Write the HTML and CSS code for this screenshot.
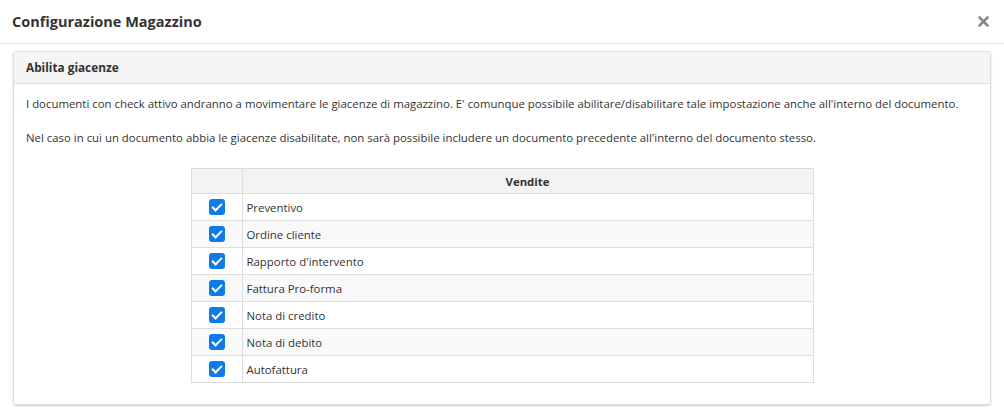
FILE: index.html
```html
<!DOCTYPE html>
<html lang="it">
<head>
    <meta charset="UTF-8">
    <meta name="viewport" content="width=device-width, initial-scale=1.0">
    <title>Configurazione Magazzino</title>
    <link rel="stylesheet" href="styles.css">
</head>
<body>
    <div class="modal">
        <div class="modal-header">
            <h4 class="modal-title">Configurazione Magazzino</h4>
            <button class="close" type="button">
                <svg width="11" height="11" viewBox="0 0 11 11"><path d="M1.5 1.5 L9.5 9.5 M9.5 1.5 L1.5 9.5" stroke="#888" stroke-width="2.6" stroke-linecap="round"/></svg>
            </button>
        </div>
        <div class="modal-body">
            <div class="panel">
                <div class="panel-heading">Abilita giacenze</div>
                <div class="panel-body">
                    <p>I documenti con check attivo andranno a movimentare le giacenze di magazzino. E' comunque possibile abilitare/disabilitare tale impostazione anche all'interno del documento.</p>
                    <p>Nel caso in cui un documento abbia le giacenze disabilitate, non sarà possibile includere un documento precedente all'interno del documento stesso.</p>
                    <table class="doc-table">
                        <thead>
                            <tr><th class="col-check"></th><th>Vendite</th></tr>
                        </thead>
                        <tbody>
                            <tr><td class="col-check"><span class="check"></span></td><td>Preventivo</td></tr>
                            <tr><td class="col-check"><span class="check"></span></td><td>Ordine cliente</td></tr>
                            <tr><td class="col-check"><span class="check"></span></td><td>Rapporto d'intervento</td></tr>
                            <tr><td class="col-check"><span class="check"></span></td><td>Fattura Pro-forma</td></tr>
                            <tr><td class="col-check"><span class="check"></span></td><td>Nota di credito</td></tr>
                            <tr><td class="col-check"><span class="check"></span></td><td>Nota di debito</td></tr>
                            <tr><td class="col-check"><span class="check"></span></td><td>Autofattura</td></tr>
                        </tbody>
                    </table>
                </div>
            </div>
        </div>
    </div>
</body>
</html>
```

FILE: styles.css
```css
body {
    margin: 0;
    font-family: "Open Sans", "Noto Sans", sans-serif;
    font-size: 11.4px;
    color: #333;
    background: #fff;
}
.modal {
    width: 1004px;
}
.modal-header {
    display: flex;
    justify-content: space-between;
    align-items: center;
    height: 44px;
    padding: 0 15px 0 12px;
    box-sizing: border-box;
    border-bottom: 1px solid #e5e5e5;
}
.modal-title {
    margin: 0;
    font-size: 14.5px;
    font-weight: bold;
    color: #333;
}
.close {
    border: none;
    background: none;
    padding: 0;
    cursor: pointer;
    display: flex;
}
.modal-body {
    padding: 7px 13px;
}
.panel {
    border: 1px solid #ddd;
    border-radius: 3px;
    box-shadow: 0 1px 2px rgba(0, 0, 0, 0.2);
}
.panel-heading {
    height: 31px;
    line-height: 31px;
    padding: 0 12px;
    background-color: #f5f5f5;
    border-bottom: 1px solid #ddd;
    font-weight: bold;
    font-size: 11.8px;
}
.panel-body {
    padding: 11px 12px 21px;
}
.panel-body p {
    margin: 0 0 17px;
    line-height: 17px;
}
.doc-table {
    width: 623px;
    margin: 22px auto 0;
    border-collapse: collapse;
}
.doc-table th, .doc-table td {
    border: 1px solid #ddd;
    padding: 0 4px;
    text-align: left;
}
.doc-table th {
    height: 24px;
    background-color: #f3f3f3;
    text-align: center;
    font-weight: bold;
}
.doc-table td {
    height: 26px;
}
.doc-table tbody tr:nth-child(even) td {
    background-color: #f9f9f9;
}
.doc-table .col-check {
    width: 42px;
    text-align: center;
}
.check {
    display: inline-block;
    vertical-align: middle;
    width: 16px;
    height: 16px;
    border-radius: 3px;
    background-color: #0d7ce8;
    position: relative;
}
.check::after {
    content: "";
    position: absolute;
    left: 5px;
    top: 2px;
    width: 4px;
    height: 8px;
    border: solid #fff;
    border-width: 0 2px 2px 0;
    transform: rotate(45deg);
}
```
